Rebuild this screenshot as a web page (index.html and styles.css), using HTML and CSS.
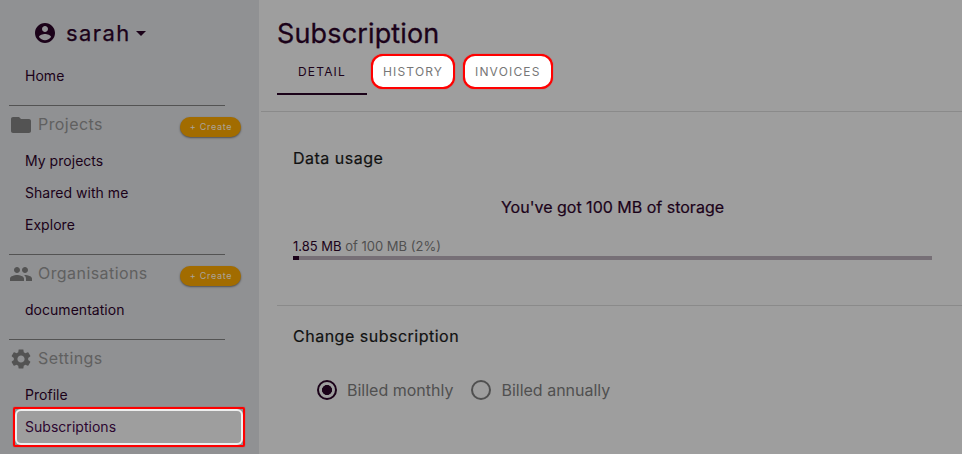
FILE: index.html
```html
<!DOCTYPE html>
<html lang="en">
<head>
<meta charset="utf-8">
<title>Subscription</title>
<link rel="stylesheet" href="styles.css">
</head>
<body>
<div class="app">
  <aside class="sidebar">
    <div class="user">
      <svg class="icon" viewBox="0 0 24 24"><path d="M12 2C6.48 2 2 6.48 2 12s4.48 10 10 10 10-4.48 10-10S17.52 2 12 2zm0 3c1.66 0 3 1.34 3 3s-1.34 3-3 3-3-1.34-3-3 1.340-3 3-3zm0 14.200c-2.500 0-4.710-1.280-6-3.220.030-1.990 4-3.080 6-3.080 1.990 0 5.970 1.090 6 3.080-1.290 1.940-3.500 3.220-6 3.220z"/></svg>
      <span class="user-name">sarah</span>
      <svg class="icon caret" viewBox="0 0 24 24"><path d="M7 10l5 5 5-5z"/></svg>
    </div>
    <a class="item">Home</a>
    <section class="group">
      <header class="group-head">
        <svg class="icon" viewBox="0 0 24 24"><path d="M10 4H4c-1.100 0-1.990.900-1.990 2L2 18c0 1.100.900 2 2 2h16c1.100 0 2-.900 2-2V8c0-1.100-.900-2-2-2h-8l-2-2z"/></svg>
        <h2>Projects</h2><button class="create">+ Create</button>
      </header>
      <a class="item">My projects</a>
      <a class="item">Shared with me</a>
      <a class="item">Explore</a>
    </section>
    <section class="group">
      <header class="group-head">
        <svg class="icon" viewBox="0 0 24 24"><path d="M16 11c1.660 0 2.990-1.340 2.990-3S17.660 5 16 5c-1.660 0-3 1.340-3 3s1.340 3 3 3zm-8 0c1.660 0 2.990-1.340 2.990-3S9.660 5 8 5C6.340 5 5 6.340 5 8s1.340 3 3 3zm0 2c-2.330 0-7 1.170-7 3.500V19h14v-2.500c0-2.330-4.670-3.500-7-3.500zm8 0c-.290 0-.620.020-.970.050 1.160.840 1.970 1.970 1.970 3.450V19h6v-2.500c0-2.330-4.670-3.500-7-3.500z"/></svg>
        <h2>Organisations</h2><button class="create">+ Create</button>
      </header>
      <a class="item">documentation</a>
    </section>
    <section class="group">
      <header class="group-head">
        <svg class="icon" viewBox="0 0 24 24"><path d="M19.140 12.940c.040-.300.060-.610.060-.940 0-.320-.020-.640-.070-.940l2.030-1.580c.180-.140.230-.410.120-.610l-1.920-3.320c-.120-.220-.370-.290-.590-.220l-2.390.960c-.500-.380-1.030-.700-1.620-.940l-.360-2.540c-.040-.240-.240-.410-.480-.410h-3.840c-.240 0-.430.170-.470.410l-.360 2.540c-.590.240-1.130.570-1.620.940l-2.390-.960c-.220-.080-.470 0-.590.220L2.740 8.870c-.120.210-.080.470.120.610l2.030 1.580c-.050.300-.090.630-.090.940s.020.640.070.940l-2.030 1.580c-.180.140-.230.410-.120.610l1.920 3.320c.120.220.370.290.590.220l2.390-.960c.500.380 1.030.700 1.620.940l.360 2.540c.050.240.240.410.480.410h3.840c.240 0 .440-.170.470-.410l.360-2.540c.590-.240 1.130-.560 1.620-.940l2.390.960c.220.080.470 0 .590-.220l1.920-3.320c.120-.220.070-.470-.120-.610l-2.010-1.580zM12 15.600c-1.980 0-3.600-1.620-3.600-3.600s1.620-3.600 3.600-3.600 3.600 1.620 3.600 3.600-1.620 3.600-3.600 3.600z"/></svg>
        <h2>Settings</h2>
      </header>
      <a class="item">Profile</a>
      <a class="item selected">Subscriptions</a>
    </section>
  </aside>
  <main class="main">
    <div class="top">
      <h1>Subscription</h1>
      <nav class="tabs">
        <a class="tab active">DETAIL</a>
        <a class="tab"><span class="marked">HISTORY</span></a>
        <a class="tab"><span class="marked wide">INVOICES</span></a>
      </nav>
    </div>
    <section class="panel usage">
      <h3>Data usage</h3>
      <p class="quota">You've got 100 MB of storage</p>
      <p class="amount"><b>1.85 MB</b> of 100 MB (2%)</p>
      <div class="bar"><div class="fill"></div></div>
    </section>
    <section class="panel change">
      <h3>Change subscription</h3>
      <div class="options">
        <span class="radio on"></span><span class="label">Billed monthly</span>
        <span class="radio"></span><span class="label">Billed annually</span>
      </div>
    </section>
  </main>
</div>
</body>
</html>
```
FILE: styles.css
```css
* { box-sizing: border-box; }
body { margin: 0; font-family: Inter, sans-serif; color: #1b0219; background: #9e9e9e; overflow: hidden; }
h1, h2, h3, p { margin: 0; font-weight: 400; }
.app { display: flex; height: 454px; overflow: hidden; }
.icon { width: 24px; height: 24px; flex: none; fill: currentColor; }

.sidebar { width: 259px; flex: none; background: #909193; }
.user { display: flex; align-items: center; height: 60px; padding: 6px 0 0 33px; }
.user-name { width: 63px; margin-left: 9px; font-size: 22px; -webkit-text-stroke: 0.25px; letter-spacing: 1.4px; line-height: 28px; }
.caret { margin-left: 0; }
.item { display: flex; align-items: center; height: 32px; margin: 0 18px 0 17px; padding: 0 0 2px 8px; font-size: 14px; letter-spacing: 0.03px; }
.group { margin-top: 13px; }
.group-head { display: flex; align-items: center; height: 40px; margin-left: 9px; width: 232px; color: #535353; position: relative; }
.group-head::before { content: ""; position: absolute; top: 0; left: 0; width: 216px; height: 1px; background: #535353; }
.group-head h2 { margin: -2px 0 0 5px; font-size: 16px; letter-spacing: 0.43px; line-height: 20px; color: #606060; }
.group-head .icon { color: #535353; }
.create { margin: 4px 0 0 auto; width: 61px; height: 20px; padding: 0; border: 0; border-radius: 10px; background: #a26c00; color: #aaa49b; font: 9px/20px Inter, sans-serif; letter-spacing: 0.7px; text-indent: 1px; box-shadow: 0 1px 2px rgba(0, 0, 0, 0.45); }
.selected { border-radius: 4px; background: #9e9e9e; box-shadow: 0 0 0 2px #eee; position: relative; color: #2c0630; }
.selected::after { content: ""; position: absolute; inset: -4px; border: 2px solid #f00; border-radius: 2px; box-shadow: 0 0 1px #f00; }

.main { flex: 1; min-width: 0; padding-left: 2px; }
.top { height: 112px; padding: 20px 0 0 16px; border-bottom: 1px solid #8a8a8a; }
h1 { font-size: 27px; -webkit-text-stroke: 0.3px; line-height: 27px; letter-spacing: 0.15px; }
.tabs { display: flex; height: 48px; }
.tab { display: flex; align-items: center; justify-content: center; font-size: 12px; letter-spacing: 1.17px; }
.active { width: 90px; border-bottom: 2px solid #1b0219; padding-top: 2px; }
.marked { display: flex; align-items: center; height: 35px; width: 84px; margin: 0 4px; padding: 0 0 0 10px; border: 2px solid #f00; border-radius: 12px; background: #fff; color: #777; box-shadow: 0 0 1px #f00; }
.wide { width: 90px; }
.panel { margin-left: 16px; padding: 0 16px; }
.usage { height: 194px; padding: 34px 30px 0 16px; border-bottom: 1px solid #8a8a8a; }
h3 { font-size: 16px; -webkit-text-stroke: 0.2px; line-height: 24px; letter-spacing: 0.5px; color: #111; }
.quota { margin-top: 25px; text-align: center; font-size: 16px; -webkit-text-stroke: 0.2px; line-height: 24px; letter-spacing: 0; }
.amount { margin-top: 19px; font-size: 13px; line-height: 16px; letter-spacing: 0; color: #505050; }
.amount b { font-weight: 400; color: #1b0219; }
.bar { height: 4px; margin-top: 2px; background: #766f76; }
.fill { width: 6px; height: 4px; background: #1b0219; }
.change { padding-top: 18px; }
.options { display: flex; align-items: center; height: 24px; margin: 30px 0 0 24px; }
.radio { width: 20px; height: 20px; flex: none; border: 2px solid #505050; border-radius: 50%; }
.radio.on { border-color: #1b0219; background: radial-gradient(circle, #1b0219 4.7px, transparent 5.3px); }
.label { margin: 0 18px 0 10px; font-size: 16px; letter-spacing: 0; color: #505050; }
```
